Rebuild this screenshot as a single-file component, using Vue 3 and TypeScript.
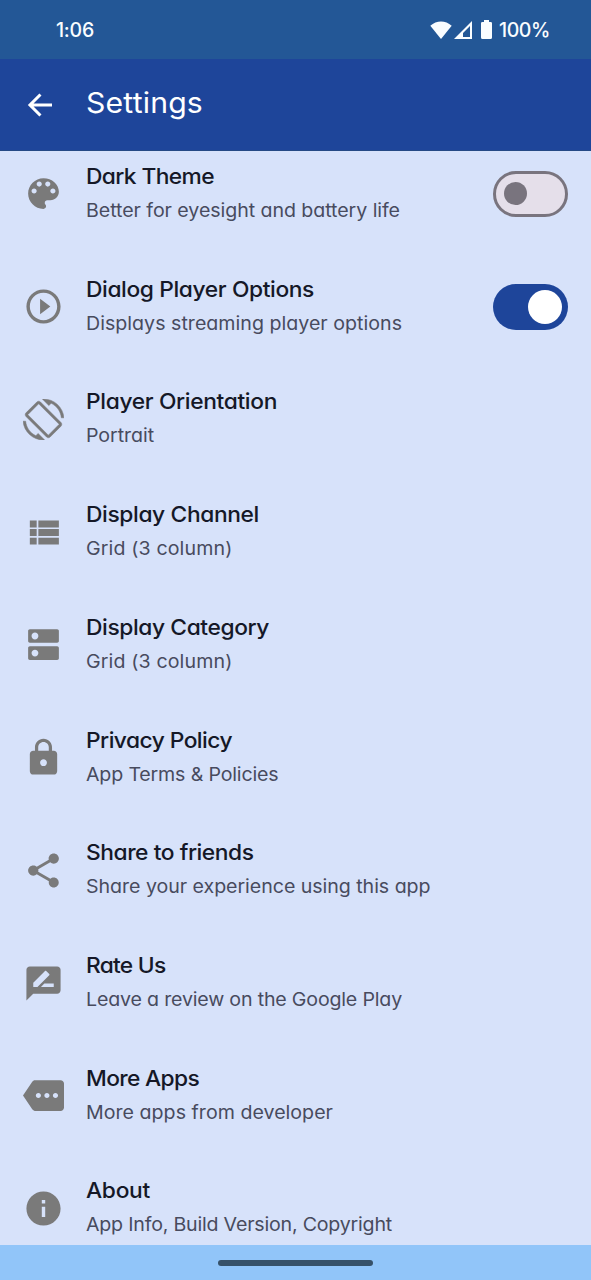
<script setup lang="ts">
import { nextTick, onMounted, ref } from 'vue'

interface SettingItem {
  title: string
  titleWidth: number
  detail: string
  detailWidth: number
  icon: string
  bold?: boolean
  toggle?: 'on' | 'off'
}

const items: SettingItem[] = [
  { title: 'Dark Theme', titleWidth: 128, detail: 'Better for eyesight and battery life', detailWidth: 314, toggle: 'off',
    icon: 'M12 3c-4.97 0-9 4.03-9 9s4.03 9 9 9c.83 0 1.5-.67 1.5-1.5 0-.39-.15-.74-.39-1.01-.23-.26-.38-.61-.38-.99 0-.83.67-1.5 1.5-1.5H16c2.76 0 5-2.24 5-5 0-4.42-4.03-8-9-8zm-5.5 9c-.83 0-1.5-.67-1.5-1.5S5.67 9 6.5 9 8 9.67 8 10.5 7.33 12 6.5 12zm3-4C8.67 8 8 7.33 8 6.5S8.67 5 9.5 5s1.5.67 1.5 1.5S10.33 8 9.5 8zm5 0c-.83 0-1.5-.67-1.5-1.5S13.67 5 14.5 5s1.5.67 1.5 1.5S15.33 8 14.5 8zm3 4c-.83 0-1.5-.67-1.5-1.5S16.67 9 17.5 9s1.5.67 1.5 1.5-.67 1.5-1.5 1.5z' },
  { title: 'Dialog Player Options', titleWidth: 228, detail: 'Displays streaming player options', detailWidth: 316, toggle: 'on',
    icon: 'M10 16.5l6-4.5-6-4.5v9zM12 2C6.48 2 2 6.48 2 12s4.48 10 10 10 10-4.48 10-10S17.52 2 12 2zm0 18c-4.41 0-8-3.59-8-8s3.59-8 8-8 8 3.59 8 8-3.59 8-8 8z' },
  { title: 'Player Orientation', titleWidth: 191, detail: 'Portrait', detailWidth: 68, bold: true,
    icon: 'M16.48 2.52c3.27 1.55 5.61 4.72 5.97 8.48h1.5C23.44 4.84 18.29 0 12 0l-.66.03 3.81 3.81 1.33-1.32zm-6.25-.77c-.59-.59-1.54-.59-2.12 0L1.75 8.11c-.59.59-.59 1.54 0 2.12l12.02 12.02c.59.59 1.54.59 2.12 0l6.36-6.36c.59-.59.59-1.54 0-2.12L10.23 1.75zm4.6 19.44L2.81 9.17l6.36-6.36 12.02 12.02-6.36 6.36zm-7.31.29C4.25 19.94 1.91 16.76 1.55 13H.05C.56 19.16 5.71 24 12 24l.66-.03-3.81-3.81-1.33 1.32z' },
  { title: 'Display Channel', titleWidth: 173, detail: 'Grid (3 column)', detailWidth: 146.500,
    icon: 'M4 14h4v-4H4v4zm0 5h4v-4H4v4zM4 9h4V5H4v4zm5 5h12v-4H9v4zm0 5h12v-4H9v4zM9 5v4h12V5H9z' },
  { title: 'Display Category', titleWidth: 183, detail: 'Grid (3 column)', detailWidth: 146.500,
    icon: 'M20 13H4c-.55 0-1 .45-1 1v6c0 .55.45 1 1 1h16c.55 0 1-.45 1-1v-6c0-.55-.45-1-1-1zM7 19c-1.1 0-2-.9-2-2s.9-2 2-2 2 .9 2 2-.9 2-2 2zM20 3H4c-.55 0-1 .45-1 1v6c0 .55.45 1 1 1h16c.55 0 1-.45 1-1V4c0-.55-.45-1-1-1zM7 9c-1.1 0-2-.9-2-2s.9-2 2-2 2 .9 2 2-.9 2-2 2z' },
  { title: 'Privacy Policy', titleWidth: 146, detail: 'App Terms & Policies', detailWidth: 192.500,
    icon: 'M18 8h-1V6c0-2.76-2.24-5-5-5S7 3.24 7 6v2H6c-1.1 0-2 .9-2 2v10c0 1.1.9 2 2 2h12c1.1 0 2-.9 2-2V10c0-1.1-.9-2-2-2zm-6 9c-1.1 0-2-.9-2-2s.9-2 2-2 2 .9 2 2-.9 2-2 2zm3.1-9H8.9V6c0-1.71 1.39-3.1 3.1-3.1 1.71 0 3.1 1.39 3.1 3.1v2z' },
  { title: 'Share to friends', titleWidth: 167.500, detail: 'Share your experience using this app', detailWidth: 344.500,
    icon: 'M18 16.08c-.76 0-1.44.3-1.96.77L8.91 12.7c.05-.23.09-.46.09-.7s-.04-.47-.09-.7l7.05-4.11c.54.5 1.25.81 2.04.81 1.66 0 3-1.34 3-3s-1.34-3-3-3-3 1.34-3 3c0 .24.04.47.09.7L8.04 9.81C7.5 9.31 6.79 9 6 9c-1.66 0-3 1.34-3 3s1.34 3 3 3c.79 0 1.5-.31 2.04-.81l7.12 4.16c-.05.21-.08.43-.08.65 0 1.61 1.31 2.92 2.92 2.92s2.92-1.31 2.92-2.92-1.31-2.92-2.92-2.92z' },
  { title: 'Rate Us', titleWidth: 79.500, detail: 'Leave a review on the Google Play', detailWidth: 316,
    icon: 'M20 2H4c-1.1 0-1.99.9-1.99 2L2 22l4-4h14c1.1 0 2-.9 2-2V4c0-1.1-.9-2-2-2zM6 14v-2.47l6.88-6.88c.2-.2.51-.2.71 0l1.77 1.77c.2.2.2.51 0 .71L8.47 14H6zm12 0h-7.5l2-2H18v2z' },
  { title: 'More Apps', titleWidth: 113, detail: 'More apps from developer', detailWidth: 247,
    icon: 'M22 3H7c-.69 0-1.23.35-1.59.88L0 12l5.41 8.11c.36.53.9.89 1.59.89h15c1.1 0 2-.9 2-2V5c0-1.1-.9-2-2-2zM9 13.5c-.83 0-1.5-.67-1.5-1.5s.67-1.5 1.5-1.5 1.5.67 1.5 1.5-.67 1.5-1.5 1.5zm5 0c-.83 0-1.5-.67-1.5-1.5s.67-1.5 1.5-1.5 1.5.67 1.5 1.5-.67 1.5-1.5 1.5zm5 0c-.83 0-1.5-.67-1.5-1.5s.67-1.5 1.5-1.5 1.5.67 1.5 1.5-.67 1.5-1.5 1.5z' },
  { title: 'About', titleWidth: 64, detail: 'App Info, Build Version, Copyright', detailWidth: 306,
    icon: 'M12 2C6.48 2 2 6.48 2 12s4.48 10 10 10 10-4.48 10-10S17.52 2 12 2zm1 15h-2v-6h2v6zm0-8h-2V7h2v2z' },
]

// Tracks each label so that it fills its set width, allowing for its horizontal stretch.
const root = ref<HTMLElement | null>(null)
const tracking = ref<Record<string, string>>({})

onMounted(async () => {
  await nextTick()
  const result: Record<string, string> = {}
  root.value?.querySelectorAll<HTMLElement>('[data-fit]').forEach((el) => {
    const drawn = el.getBoundingClientRect().width
    const stretch = drawn / el.offsetWidth
    const count = (el.textContent ?? '').length
    result[el.dataset.key as string] = `${((Number(el.dataset.fit) - drawn) / stretch / count).toFixed(3)}px`
  })
  tracking.value = result
})
</script>

<template>
  <main ref="root" class="screen">
    <header class="status">
      <span class="clock" data-fit="38" data-key="clock" :style="{ letterSpacing: tracking.clock }">1:06</span>
      <div class="indicators">
        <svg class="wifi" viewBox="0 0 22 18"><path d="M.3 4.700C6.500-1 15.500-1 21.700 4.700L11 18z" /></svg>
        <svg class="signal" viewBox="0 0 18 18"><path fill-rule="evenodd" d="M18 0v18H0zM16 5v11H9V12z" /></svg>
        <svg class="battery" viewBox="0 0 11 19"><path d="M3 0h5v2h1.700Q11 2 11 3.300v14.200Q11 19 9.500 19h-8Q0 19 0 17.500V3.300Q0 2 1.300 2H3z" /></svg>
        <span class="percent" data-fit="51" data-key="percent" :style="{ letterSpacing: tracking.percent }">100%</span>
      </div>
    </header>
    <nav class="toolbar">
      <svg class="back" viewBox="0 0 24 24"><path d="M20 12H5.300M12.300 5L5.300 12l7 7" /></svg>
      <h1><span class="wide" data-fit="117" data-key="heading" :style="{ letterSpacing: tracking.heading }">Settings</span></h1>
    </nav>
    <section class="content">
      <ul class="list">
        <li v-for="item in items" :key="item.title" class="row">
          <svg class="icon" :class="{ bold: item.bold }" viewBox="0 0 24 24"><path :d="item.icon" /></svg>
          <div class="copy">
            <div class="title"><span class="wide" :data-fit="item.titleWidth" :data-key="item.title" :style="{ letterSpacing: tracking[item.title] }">{{ item.title }}</span></div>
            <div class="detail"><span class="wide" :data-fit="item.detailWidth" :data-key="item.title + '-detail'" :style="{ letterSpacing: tracking[item.title + '-detail'] }">{{ item.detail }}</span></div>
          </div>
          <div v-if="item.toggle" class="switch" :class="item.toggle"><i class="thumb"></i></div>
        </li>
      </ul>
    </section>
    <footer class="gesture"><div class="handle"></div></footer>
  </main>
</template>

<style>
body { margin: 0; background: #d7e2fa; }
</style>

<style scoped>
.screen {
  width: 591px;
  height: 1280px;
  display: flex;
  flex-direction: column;
  overflow: hidden;
  background: #d7e2fa;
  box-sizing: border-box;
  font-family: Inter, "Open Sans", sans-serif;
  font-feature-settings: "cv11" 1, "calt" 0;
}
.screen span { white-space: nowrap; }
.wide { display: inline-block; transform: scaleX(1.060); transform-origin: left center; }
.status {
  height: 59px;
  flex: none;
  display: flex;
  justify-content: space-between;
  align-items: center;
  padding: 0 41px 0 56px;
  box-sizing: border-box;
  background: #235796;
  color: #fafdff;
  font-size: 19.500px;
  font-weight: 500;
}
.status span { line-height: 24px; }
.indicators { display: flex; align-items: center; }
.indicators svg { fill: #fafdff; }
.wifi { width: 22px; height: 18px; }
.signal { width: 18px; height: 18px; margin-left: 2px; }
.battery { width: 11px; height: 19px; margin: 0 7px 0 9px; }
.toolbar {
  height: 92px;
  flex: none;
  box-sizing: border-box;
  display: flex;
  align-items: center;
  padding-left: 22px;
  background: #1e459a;
  border-bottom: 1px solid #254985;
  color: #fff;
}
.back { width: 36px; height: 36px; fill: none; stroke: #fff; stroke-width: 2; }
h1 { margin: -4px 0 0 28px; font-size: 28.500px; font-weight: 400; line-height: 36px; }
.content { flex: 1; min-height: 0; overflow: hidden; }
.list { list-style: none; margin: -13.400px 0 0; padding: 0; }
.row {
  height: 112.720px;
  display: flex;
  align-items: center;
  padding: 0 23px 0 22.500px;
  box-sizing: border-box;
}
.icon { width: 41px; height: 41px; flex: none; fill: #7a7a7a; }
.icon.bold { stroke: #7a7a7a; stroke-width: 0.300; }
.copy { flex: 1; margin: -2px 0 0 22.800px; }
.title, .detail { height: 34px; line-height: 34px; }
.title { font-size: 21.500px; font-weight: 500; color: #151827; }
.detail { font-size: 18.500px; font-weight: 370; color: #484b5e; }
.switch {
  width: 75px;
  height: 46px;
  border-radius: 23px;
  box-sizing: border-box;
  display: flex;
  align-items: center;
  flex: none;
}
.switch.off { background: #e5dfea; border: 3px solid #79747e; padding-left: 8px; }
.switch.on { background: #1e459a; justify-content: flex-end; padding-right: 6px; }
.thumb { display: block; border-radius: 50%; }
.off .thumb { width: 23px; height: 23px; background: #79747e; }
.on .thumb { width: 34px; height: 34px; background: #fff; }
.gesture {
  height: 35px;
  flex: none;
  display: flex;
  justify-content: center;
  align-items: center;
  background: #91c5f9;
}
.handle { width: 155px; height: 6px; border-radius: 3px; background: #365169; }
</style>
